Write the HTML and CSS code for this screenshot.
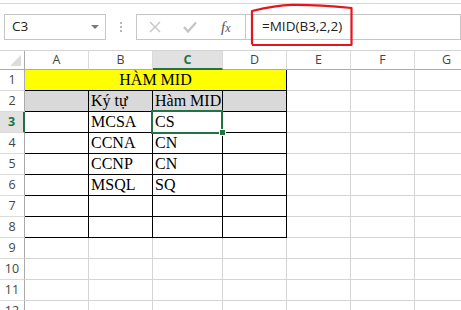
FILE: index.html
```html
<!DOCTYPE html>
<html>
<head>
<meta charset="utf-8">
<link rel="stylesheet" href="styles.css">
</head>
<body>
<div class="page">
  <div class="ribbon-edge"></div>
  <div class="fbar">
    <div class="namebox"><span class="name">C3</span><span class="arrow"></span></div>
    <div class="dots"><i></i><i></i><i></i></div>
    <div class="tools">
      <svg class="icon" width="14" height="14" viewBox="0 0 14 14"><path d="M2 2 L12 12 M12 2 L2 12" stroke="#c4c4c4" stroke-width="1.4" fill="none"/></svg>
      <svg class="icon" width="14" height="14" viewBox="0 0 14 14"><path d="M1 7 L5 11.5 L13 2.5" stroke="#c4c4c4" stroke-width="2.2" fill="none"/></svg>
      <span class="fx">f<span class="x">x</span></span>
    </div>
    <div class="finput"><span class="ftext">=MID(B3,2,2)</span></div>
  </div>
  <div class="grid">
    <div class="corner"><span class="tri"></span></div>
    <div class="ch">A</div><div class="ch">B</div><div class="ch ch-sel">C</div><div class="ch">D</div><div class="ch">E</div><div class="ch">F</div><div class="ch">G</div>

    <div class="rh">1</div><div class="c b title">HÀM MID</div><div class="c"></div><div class="c"></div><div class="c"></div>
    <div class="rh">2</div><div class="c b gray"></div><div class="c b gray">Ký tự</div><div class="c b gray">Hàm MID</div><div class="c b gray"></div><div class="c"></div><div class="c"></div><div class="c"></div>
    <div class="rh rh-sel">3</div><div class="c b"></div><div class="c b">MCSA</div><div class="c b">CS</div><div class="c b"></div><div class="c"></div><div class="c"></div><div class="c"></div>
    <div class="rh">4</div><div class="c b"></div><div class="c b">CCNA</div><div class="c b">CN</div><div class="c b"></div><div class="c"></div><div class="c"></div><div class="c"></div>
    <div class="rh">5</div><div class="c b"></div><div class="c b">CCNP</div><div class="c b">CN</div><div class="c b"></div><div class="c"></div><div class="c"></div><div class="c"></div>
    <div class="rh">6</div><div class="c b"></div><div class="c b">MSQL</div><div class="c b">SQ</div><div class="c b"></div><div class="c"></div><div class="c"></div><div class="c"></div>
    <div class="rh">7</div><div class="c b"></div><div class="c b"></div><div class="c b"></div><div class="c b"></div><div class="c"></div><div class="c"></div><div class="c"></div>
    <div class="rh">8</div><div class="c b"></div><div class="c b"></div><div class="c b"></div><div class="c b"></div><div class="c"></div><div class="c"></div><div class="c"></div>
    <div class="rh">9</div><div class="c"></div><div class="c"></div><div class="c"></div><div class="c"></div><div class="c"></div><div class="c"></div><div class="c"></div>
    <div class="rh">10</div><div class="c"></div><div class="c"></div><div class="c"></div><div class="c"></div><div class="c"></div><div class="c"></div><div class="c"></div>
    <div class="rh">11</div><div class="c"></div><div class="c"></div><div class="c"></div><div class="c"></div><div class="c"></div><div class="c"></div><div class="c"></div>
    <div class="rh">12</div><div class="c"></div><div class="c"></div><div class="c"></div><div class="c"></div><div class="c"></div><div class="c"></div><div class="c"></div>

    <div class="selection"></div>
    <div class="handle"></div>
  </div>
  <svg class="annot" width="461" height="60" viewBox="0 0 461 60"><path d="M252 44.5 L252 11 C262 8.5 276 5 292 4.8 C312 4.6 332 6 351.5 8 L351.5 45 L252 45" stroke="#e3161d" stroke-width="2.2" fill="none" stroke-linejoin="round"/></svg>
</div>
</body>
</html>
```

FILE: styles.css
```css
* { box-sizing: border-box; }
html, body { margin: 0; padding: 0; background: #fff; }
.page {
  position: relative;
  width: 461px;
  height: 310px;
  overflow: hidden;
  font-family: "Open Sans", "Noto Sans", sans-serif;
}
.ribbon-edge {
  height: 4px;
  border-bottom: 1px solid #d6d6d6;
}
.fbar {
  display: flex;
  height: 26px;
  margin-top: 10px;
}
.namebox {
  margin-left: 4px;
  width: 102px;
  border: 1px solid #c6c6c6;
  display: flex;
  align-items: center;
  justify-content: space-between;
  padding: 0 6px 0 7px;
}
.name {
  font-size: 13.5px;
  color: #222;
  line-height: 1;
}
.arrow {
  width: 0; height: 0;
  border-left: 4px solid transparent;
  border-right: 4px solid transparent;
  border-top: 4px solid #7a7a7a;
}
.dots {
  width: 30px;
  display: flex;
  flex-direction: column;
  align-items: center;
  justify-content: center;
  gap: 2px;
}
.dots i {
  display: block;
  width: 2px; height: 2px;
  background: #b8b8b8;
}
.tools {
  width: 110px;
  border: 1px solid #c6c6c6;
  display: flex;
  align-items: center;
  padding-left: 11px;
  gap: 21px;
}
.icon { display: block; }
.fx {
  font-family: "Liberation Serif", serif;
  font-style: italic;
  font-size: 15px;
  color: #555;
  line-height: 1;
  margin-left: 3px;
}
.fx .x { font-size: 12px; }
.finput {
  flex: 1;
  border: 1px solid #c6c6c6;
  border-left: none;
  display: flex;
  align-items: center;
  padding-left: 16px;
}
.ftext {
  font-size: 13.5px;
  color: #222;
  line-height: 1;
}
.grid {
  position: relative;
  margin-top: 10px;
  border-top: 1px solid #d4d4d4;
  display: grid;
  grid-template-columns: 25px 64px 64px 70px 64px 64px 64px 64px;
  grid-template-rows: 19px repeat(12, 21px);
}
.corner {
  position: relative;
  border-right: 1px solid #ababab;
  border-bottom: 1px solid #ababab;
}
.tri {
  position: absolute;
  right: 3px;
  bottom: 3px;
  width: 0; height: 0;
  border-left: 11px solid transparent;
  border-bottom: 11px solid #dcdcdc;
}
.ch {
  border-right: 1px solid #dadada;
  border-bottom: 1px solid #ababab;
  text-align: center;
  font-size: 12.5px;
  line-height: 18px;
  color: #444;
}
.ch-sel {
  background: #e1e1e1;
  border-bottom: 2px solid #217346;
  color: #217346;
  font-weight: 700;
}
.rh {
  border-right: 1px solid #ababab;
  border-bottom: 1px solid #dadada;
  text-align: center;
  font-size: 12.5px;
  line-height: 20px;
  color: #444;
}
.rh-sel {
  background: #e1e1e1;
  border-right: 2px solid #217346;
  color: #217346;
  font-weight: 700;
}
.c {
  border-right: 1px solid #d4d4d4;
  border-bottom: 1px solid #d4d4d4;
  font-family: "Liberation Serif", "Times New Roman", serif;
  font-size: 16px;
  line-height: 20px;
  color: #000;
  padding-left: 2px;
  white-space: nowrap;
}
.c.b {
  border-right-color: #000;
  border-bottom-color: #000;
}
.title {
  grid-column: span 4;
  background: #ffff00;
  text-align: center;
  padding-left: 0;
}
.gray { background: #d9d9d9; }
.selection {
  position: absolute;
  left: 151px;
  top: 59px;
  width: 72px;
  height: 24px;
  border: 2px solid #217346;
}
.handle {
  position: absolute;
  left: 220px;
  top: 79px;
  width: 5px;
  height: 5px;
  background: #217346;
  box-shadow: 0 0 0 1px #fff;
}
.annot {
  position: absolute;
  left: 0;
  top: 0;
}
```
